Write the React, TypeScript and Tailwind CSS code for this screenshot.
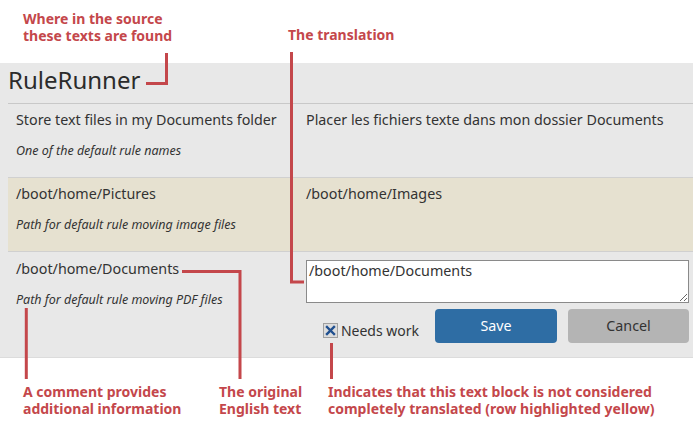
import React from "react";

const RED = "#c4474b";

const Note = ({ children, className }: { children: React.ReactNode; className?: string }) => (
  <div className={`text-[14px] leading-[17px] font-bold whitespace-nowrap text-[#c4474b] ${className ?? ""}`}>{children}</div>
);

const Row = ({
  source,
  comment,
  bg,
  children,
}: {
  source: string;
  comment: string;
  bg: string;
  children: React.ReactNode;
}) => (
  <div className={`grid grid-cols-[298px_1fr] border-b border-[#d0d0d0] ${bg}`}>
    <div className="pl-2 pt-[6px]">
      <div className="text-[14.3px] leading-5 text-[#333]">{source}</div>
      <div className="mt-[13px] text-[12.5px] leading-4 italic text-[#333]">{comment}</div>
    </div>
    <div className="pt-[6px] pr-1">{children}</div>
  </div>
);

export default function App() {
  return (
    <div className="relative w-[693px] h-[441px] bg-white font-['Noto_Sans',sans-serif] text-[#333] overflow-hidden">
      {/* top annotations */}
      <div className="flex h-[63px]">
        <Note className="ml-[23px] mt-[10px] w-[200px]">
          Where in the source
          <br />
          these texts are found
        </Note>
        <Note className="ml-[65px] mt-[26px]">The translation</Note>
      </div>

      {/* panel */}
      <div className="bg-[#e8e8e8] pl-2 border-b border-[#dcdcdc]">
        <div className="h-[41px] border-b border-[#c8c8c8] text-[24px] leading-[34px] text-[#2b2b2b]">RuleRunner</div>
        <Row
          source="Store text files in my Documents folder"
          comment="One of the default rule names"
          bg="h-[74px]"
        >
          <div className="text-[14.3px] leading-5">Placer les fichiers texte dans mon dossier Documents</div>
        </Row>
        <Row
          source="/boot/home/Pictures"
          comment="Path for default rule moving image files"
          bg="h-[74px] bg-[#e6e1d0]"
        >
          <div className="text-[14.3px] leading-5">/boot/home/Images</div>
        </Row>
        <div className="grid grid-cols-[298px_1fr] h-[105px]">
          <div className="pl-2 pt-[7px]">
            <div className="text-[14.3px] leading-5">/boot/home/Documents</div>
            <div className="mt-[13px] text-[12.5px] leading-4 italic">Path for default rule moving PDF files</div>
          </div>
          <div className="pt-2 pr-1">
            <textarea
              defaultValue="/boot/home/Documents"
              className="block w-full h-[43px] bg-white border border-[#8a8a8a] px-[2px] py-0 text-[14.3px] leading-5 text-[#333] resize-y outline-none"
            />
            <div className="flex items-center justify-end mt-[6px]">
              <label className="flex items-center mt-[9px] mr-4">
                <span className="w-[15px] h-[15px] bg-[#dcdcdc] border border-[#a0a0a0] flex items-center justify-center">
                  <svg width="11" height="11" viewBox="0 0 11 11">
                    <path d="M2 2 L9 9 M9 2 L2 9" stroke="#1f4f8f" strokeWidth="2.4" strokeLinecap="square" />
                  </svg>
                </span>
                <span className="ml-[3px] text-[14px] leading-5">Needs work</span>
              </label>
              <button className="w-[122px] h-[34px] rounded bg-[#2e6da4] text-white text-[14.3px]">Save</button>
              <button className="ml-[11px] w-[121px] h-[34px] rounded bg-[#b4b4b4] text-[#333] text-[14.3px]">Cancel</button>
            </div>
          </div>
        </div>
      </div>

      {/* bottom annotations */}
      <div className="flex mt-[25px]">
        <Note className="ml-[23px] w-[196px]">
          A comment provides
          <br />
          additional information
        </Note>
        <Note className="w-[109px]">
          The original
          <br />
          English text
        </Note>
        <Note>
          Indicates that this text block is not considered
          <br />
          completely translated (row highlighted yellow)
        </Note>
      </div>

      {/* leader lines */}
      <svg className="absolute inset-0 pointer-events-none" width="693" height="441">
        <g fill="none" stroke={RED} strokeWidth="3">
          <path d="M166.5 53 V83.5 H146" />
          <path d="M291.5 52 V282 H304" />
          <path d="M182 271.5 H240 V379" />
          <path d="M26.3 308 V379" />
          <path d="M331.5 343 V379" />
        </g>
      </svg>
    </div>
  );
}
